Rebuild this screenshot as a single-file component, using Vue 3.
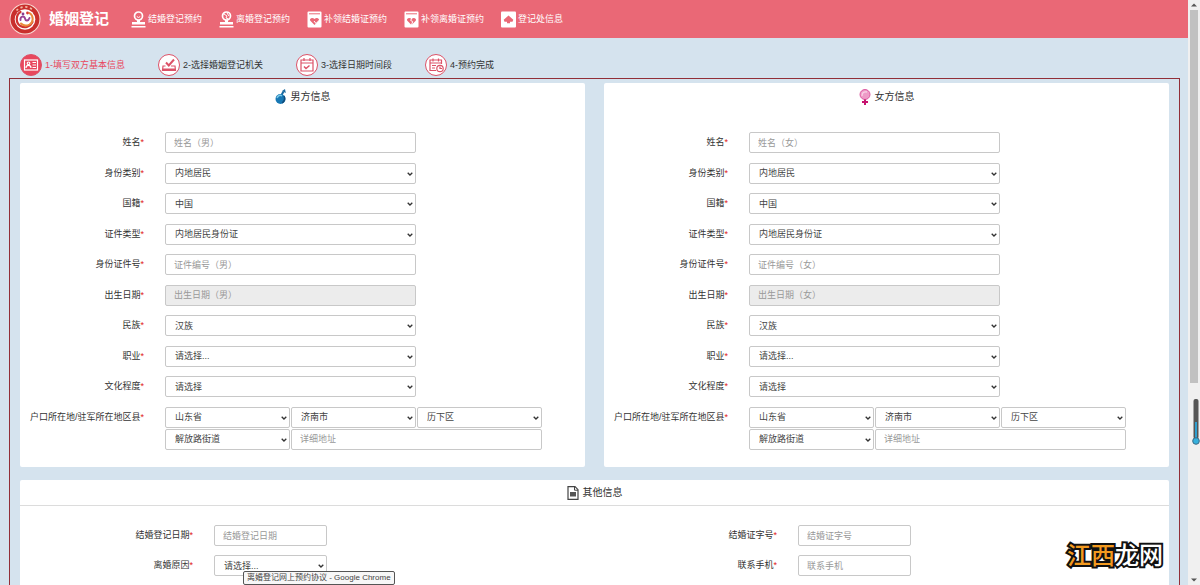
<script setup>
const navItems = [
  { icon: 'stamp', text: '结婚登记预约' },
  { icon: 'stamp-split', text: '离婚登记预约' },
  { icon: 'book', text: '补领结婚证预约' },
  { icon: 'book-split', text: '补领离婚证预约' },
  { icon: 'office', text: '登记处信息' },
]

const steps = [
  { icon: 'card', text: '1-填写双方基本信息', active: true },
  { icon: 'check', text: '2-选择婚姻登记机关' },
  { icon: 'calendar', text: '3-选择日期时间段' },
  { icon: 'clock', text: '4-预约完成' },
]

const people = [
  { id: 'male', title: '男方信息', mark: '男' },
  { id: 'female', title: '女方信息', mark: '女' },
].map((p) => ({
  ...p,
  fields: [
    { key: 'name', label: '姓名', placeholder: `姓名（${p.mark}）` },
    { key: 'kind', label: '身份类别', value: '内地居民' },
    { key: 'nation', label: '国籍', value: '中国' },
    { key: 'doc', label: '证件类型', value: '内地居民身份证' },
    { key: 'number', label: '身份证件号', placeholder: `证件编号（${p.mark}）` },
    { key: 'birth', label: '出生日期', placeholder: `出生日期（${p.mark}）`, disabled: true },
    { key: 'ethnic', label: '民族', value: '汉族' },
    { key: 'job', label: '职业', value: '请选择...' },
    { key: 'edu', label: '文化程度', value: '请选择' },
  ],
}))

const regions = ['山东省', '济南市', '历下区', '解放路街道']

const others = [
  { key: 'reg-date', label: '结婚登记日期', placeholder: '结婚登记日期' },
  { key: 'cert-no', label: '结婚证字号', placeholder: '结婚证字号' },
  { key: 'reason', label: '离婚原因', value: '请选择...' },
  { key: 'phone', label: '联系手机', placeholder: '联系手机' },
]
</script>

<template>
  <div class="window">
    <div class="page">
      <header class="topbar">
        <svg class="emblem" viewBox="0 0 32 32" aria-hidden="true">
          <circle cx="16" cy="16" r="15.500" fill="#f8dcd6" />
          <circle cx="16" cy="16" r="14.500" fill="#c92f2c" />
          <path d="M7.500 7.500A12 12 0 0 1 24.500 7.500" fill="none" stroke="#f0b9a5" stroke-width="1.800" stroke-dasharray="2.200 2.600" />
          <circle cx="16" cy="16.500" r="10.300" fill="#fff" />
          <path d="M11.500 9C6.500 12 6.500 20 11.500 23c4.500 2.600 10 .5 12-4" fill="none" stroke="#cf3430" stroke-width="2.200" stroke-linecap="round" />
          <path d="M20.500 10c4.500 3 4 9 0 11.500-3 1.700-6.500 1-8.500-1" fill="none" stroke="#ea8a3a" stroke-width="2" stroke-linecap="round" />
          <path d="M11.500 17c-.5-4 4-4.500 4.500-1.500.4 2.600 3.500 2.800 4.500-.5" fill="none" stroke="#9a4394" stroke-width="1.900" stroke-linecap="round" />
          <circle cx="14" cy="11" r="1.400" fill="#8c3a90" />
          <circle cx="18.500" cy="10" r="1.400" fill="#d83a32" />
        </svg>
        <h1>婚姻登记</h1>
        <nav>
          <a v-for="item in navItems" :key="item.text" href="#">
            <svg viewBox="0 0 15 17" aria-hidden="true">
              <g v-if="item.icon.startsWith('stamp')">
                <circle cx="7.500" cy="5" r="4" fill="none" stroke="#fff" stroke-width="1.700" />
                <path d="M6 9h3v2h5v2.500H1V11h5zM0.500 15h14v1.500H.5z" fill="#fff" />
                <path v-if="item.icon === 'stamp'" d="M5.800 5.500q1.700 2 3.400 0" fill="none" stroke="#fff" />
                <path v-else d="M5 3l3 2-1 2 2.500 1M8 2l2 3" fill="none" stroke="#fff" />
              </g>
              <g v-else-if="item.icon.startsWith('book')">
                <path d="M1.500 0.500h12a1 1 0 0 1 1 1v14a1 1 0 0 1-1 1h-12a1 1 0 0 1-1-1v-14a1 1 0 0 1 1-1z" fill="#fff" />
                <path d="M2 2.800h11" stroke="#ea6876" stroke-width="1" />
                <path d="M7.500 14L3.300 9.800C1.800 7.800 5.300 5.500 7.500 8c2.200-2.500 5.700-.2 4.200 1.800z" fill="#ea6876" />
                <path v-if="item.icon === 'book'" d="M7 10l2 2.500 3.500-3.500" fill="none" stroke="#fff" />
                <path v-else d="M8 6.500l-1.300 3 2 1-1.400 4" fill="none" stroke="#fff" />
              </g>
              <g v-else>
                <rect y="0.500" width="15" height="16" rx="1" fill="#fff" />
                <path d="M7.500 4.500l4.800 4.200-.8 2H9v1.600H6v-1.600H3.500l-.8-2z" fill="#ea6876" />
              </g>
            </svg>
            <span>{{ item.text }}</span>
          </a>
        </nav>
      </header>

      <ol class="steps">
        <li v-for="step in steps" :key="step.text" :class="{ active: step.active }">
          <svg viewBox="0 0 22 22" aria-hidden="true">
            <circle cx="11" cy="11" r="10.500" :fill="step.active ? '#e8475d' : '#fff'" stroke="#dc5268" />
            <g fill="none" :stroke="step.active ? '#fff' : '#dc5268'" stroke-width="1.200">
              <g v-if="step.icon === 'card'">
                <rect x="4.500" y="6" width="13" height="10" />
                <circle cx="8.500" cy="9.300" r="1.300" />
                <path d="M6 14c0-3.500 5-3.500 5 0M12.500 8.500H16M12.500 11H16M12.500 13.500H16" />
              </g>
              <g v-else-if="step.icon === 'check'">
                <path d="M7.500 12H5l-.5 4.500h13L17 12h-4" />
                <path d="M8 8.500l2.800 3L16 5.500" stroke-width="2" />
                <path d="M5 15.500h12" stroke-width="2" />
              </g>
              <g v-else-if="step.icon === 'calendar'">
                <path d="M5 6h12v11H5zM5 9h12M8 4v3M14 4v3" />
                <path d="M8 12.500l2 2 3.500-3" stroke-width="1.500" />
              </g>
              <g v-else>
                <path d="M11 16.500H5V6h11.500v4M5 9h11.500M8 4.500v3M13.500 4.500v3M7 11.500h4M7 14h3" />
                <circle cx="15" cy="14.500" r="3.200" />
                <path d="M15 12.500v2h2" />
              </g>
            </g>
          </svg>
          <span>{{ step.text }}</span>
        </li>
      </ol>

      <main>
        <div class="people">
          <section v-for="p in people" :key="p.id" class="panel">
            <h2>
              <svg v-if="p.id === 'male'" viewBox="0 0 12 16" aria-hidden="true">
                <path d="M6 7L8.500 2.500" stroke="#1b6aa0" stroke-width="2" />
                <path d="M7 2l3-2 .8 4z" fill="#1b6aa0" />
                <circle cx="5.500" cy="10" r="5" fill="#1878b4" />
                <path d="M2 9q2-4 5-2" fill="none" stroke="#79c8e6" stroke-width="1.500" />
                <path d="M9 7q2 4-2 7" fill="none" stroke="#124c7b" stroke-width="1.500" />
              </svg>
              <svg v-else viewBox="0 0 12 16" aria-hidden="true">
                <circle cx="6" cy="5.500" r="5" fill="#ee9bc7" stroke="#dc5aa2" />
                <path d="M3 7q0-5 5-4" fill="none" stroke="#f8d2e6" stroke-width="1.300" />
                <path d="M6 10.500V16M3 13h6" stroke="#c6136f" stroke-width="2" />
              </svg>
              <span>{{ p.title }}</span>
            </h2>
            <div class="fields">
              <div v-for="f in p.fields" :key="f.key" class="row">
                <label :for="`${p.id}-${f.key}`">{{ f.label }}<i>*</i></label>
                <div v-if="f.value" class="pick">
                  <select :id="`${p.id}-${f.key}`"><option>{{ f.value }}</option></select>
                  <svg viewBox="0 0 6 4" aria-hidden="true"><path d="M.7.700L3 3 5.300.7" /></svg>
                </div>
                <input v-else :id="`${p.id}-${f.key}`" type="text" :placeholder="f.placeholder" :disabled="f.disabled" />
              </div>
              <div class="row">
                <label :for="`${p.id}-region-0`">户口所在地/驻军所在地区县<i>*</i></label>
                <div class="address">
                  <div v-for="(r, i) in regions" :key="r" class="pick">
                    <select :id="`${p.id}-region-${i}`" :aria-label="r"><option>{{ r }}</option></select>
                    <svg viewBox="0 0 6 4" aria-hidden="true"><path d="M.7.700L3 3 5.300.7" /></svg>
                  </div>
                  <input class="detail" type="text" placeholder="详细地址" aria-label="详细地址" />
                </div>
              </div>
            </div>
          </section>
        </div>

        <section class="panel other">
          <h2>
            <svg viewBox="0 0 12 14" aria-hidden="true">
              <path d="M1 .7h7l3 3v9.600H1z" fill="none" stroke="#444" stroke-width="1.200" />
              <path d="M7.500.7v3.500H11" fill="none" stroke="#444" />
              <path d="M3 6h6v4.500H3z" fill="#555" />
            </svg>
            <span>其他信息</span>
          </h2>
          <div class="other-fields">
            <div v-for="f in others" :key="f.key" class="row">
              <label :for="f.key">{{ f.label }}<i>*</i></label>
              <div v-if="f.value" class="pick">
                <select :id="f.key"><option>{{ f.value }}</option></select>
                <svg viewBox="0 0 6 4" aria-hidden="true"><path d="M.7.700L3 3 5.300.7" /></svg>
              </div>
              <input v-else :id="f.key" type="text" :placeholder="f.placeholder" />
            </div>
          </div>
        </section>
      </main>
    </div>

    <div class="scrollbar" aria-hidden="true">
      <svg viewBox="0 0 6 4"><path d="M0 3.500L3 .5l3 3z" /></svg>
      <div class="track"><div class="thumb"></div></div>
      <svg viewBox="0 0 6 4"><path d="M0 .5l3 3 3-3z" /></svg>
    </div>

    <svg class="gauge" viewBox="0 0 8 46" aria-hidden="true">
      <rect x="1.500" y="0" width="5" height="40" rx="2" fill="#555" />
      <path d="M4 23v18" stroke="#2f9fd0" stroke-width="2" />
      <circle cx="4" cy="42" r="3.300" fill="#35b0dc" stroke="#3d6b86" />
    </svg>
    <div class="watermark"><b>江西</b><span>龙网</span></div>
    <div class="tooltip" role="tooltip">离婚登记网上预约协议 - Google Chrome</div>
  </div>
</template>

<style>
body {
  margin: 0;
  overflow: hidden;
}
</style>

<style scoped>
* {
  box-sizing: border-box;
}
.window {
  position: relative;
  display: flex;
  height: 100vh;
  overflow: hidden;
  background: #d5e3ee;
  color: #333;
  font: 9px/12px "Liberation Sans", "Noto Sans CJK SC", sans-serif;
}
.page {
  flex: 1;
  min-width: 0;
}
.topbar {
  display: flex;
  align-items: center;
  height: 38px;
  padding-left: 9px;
  background: #ea6876;
  color: #fff;
}
.emblem {
  width: 32px;
  height: 32px;
}
h1 {
  margin: 0 22px 0 8px;
  font-size: 15px;
  line-height: 20px;
  font-weight: 700;
}
nav {
  display: flex;
  gap: 17px;
}
nav a {
  display: flex;
  align-items: center;
  gap: 2px;
  color: #fff;
  text-decoration: none;
}
nav svg {
  width: 15px;
  height: 17px;
}
.steps {
  display: flex;
  gap: 33px;
  margin: 0;
  padding: 16px 20px 2px;
  list-style: none;
}
.steps li {
  display: flex;
  align-items: center;
  gap: 3px;
}
.steps svg {
  width: 22px;
  height: 22px;
}
.steps .active {
  color: #e8475d;
}
main {
  margin: 0 8px 0 9px;
  padding: 4px 10px 10px;
  border: 1px solid #922f38;
}
.people {
  display: grid;
  grid-template-columns: 1fr 1fr;
  gap: 19px;
}
.panel {
  background: #fff;
  border-radius: 2px;
}
h2 {
  display: flex;
  align-items: center;
  justify-content: center;
  gap: 4px;
  height: 28px;
  margin: 0;
  font-size: 10px;
  font-weight: 400;
}
h2 svg {
  width: 12px;
  height: 16px;
}
.fields {
  display: flex;
  flex-direction: column;
  justify-content: space-between;
  min-height: 318px;
  margin: 21px 0 17px;
}
.row {
  display: grid;
  grid-template-columns: 145px 2fr 1fr 43px;
}
label {
  padding-right: 21px;
  line-height: 21px;
  text-align: right;
  white-space: nowrap;
}
label i {
  color: #e02020;
  font-style: normal;
}
input,
select {
  display: block;
  width: 100%;
  min-width: 0;
  height: 21px;
  margin: 0;
  padding: 0 8px;
  border: 1px solid #c8c8c8;
  border-radius: 2px;
  background: #fff;
  color: #444;
  font: inherit;
  appearance: none;
}
select {
  padding: 0 9px;
}
input::placeholder {
  color: #999;
}
input:disabled {
  background: #ececec;
}
.pick {
  position: relative;
}
.pick svg {
  position: absolute;
  right: 3px;
  top: 9px;
  width: 6px;
  height: 4px;
  fill: none;
  stroke: #333;
  stroke-width: 1.3;
  pointer-events: none;
}
.address {
  grid-column: 2 / 4;
  display: grid;
  grid-template-columns: repeat(3, 1fr);
  gap: 1px;
}
.detail {
  grid-column: 2 / 4;
}
.other {
  margin-top: 13px;
}
.other h2 {
  height: 26px;
  border-bottom: 1px solid #dcdcdc;
}
.other h2 svg {
  height: 14px;
}
.other-fields {
  display: grid;
  grid-template-columns: 1fr 1fr;
  gap: 9px 19px;
  padding: 19px 0 40px;
}
.other .row {
  grid-template-columns: 194px 7fr 16fr;
}
.scrollbar {
  display: flex;
  flex-direction: column;
  align-items: center;
  width: 12px;
  padding: 3px 0;
  background: #f0f0f0;
}
.scrollbar svg {
  width: 6px;
  height: 4px;
  fill: #555;
}
.track {
  flex: 1;
  width: 8px;
  margin: 3px 0;
}
.thumb {
  height: 66%;
  background: #c1c1c1;
}
.gauge {
  position: absolute;
  right: 0;
  bottom: 140px;
  width: 8px;
  height: 46px;
}
.watermark {
  position: absolute;
  right: 37px;
  bottom: 15px;
  color: #fff;
  font: 500 24px/32px "Noto Sans CJK SC", sans-serif;
  -webkit-text-stroke: 4px #111;
  paint-order: stroke fill;
}
.watermark b {
  color: #f39a1f;
  font-weight: 500;
}
.tooltip {
  position: absolute;
  left: 243px;
  bottom: 0;
  padding: 0 3px;
  border: 1px solid #555;
  border-radius: 2px;
  background: #f7f7f7;
  color: #444;
  font-size: 8px;
}
</style>
